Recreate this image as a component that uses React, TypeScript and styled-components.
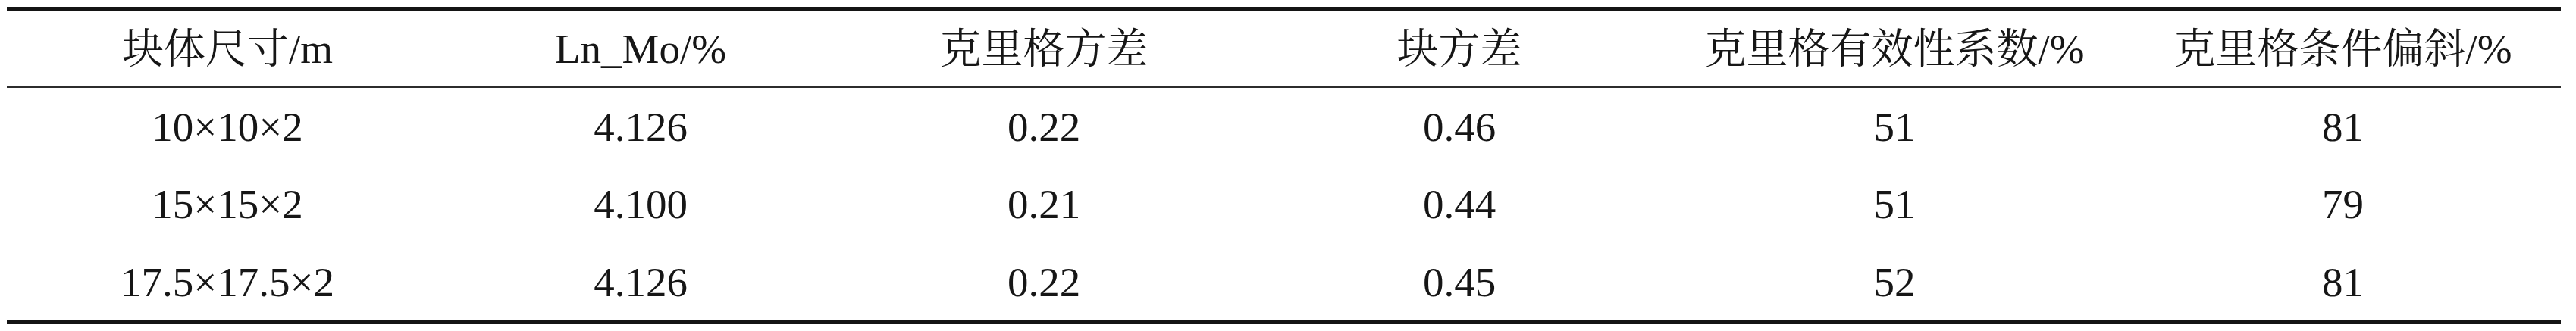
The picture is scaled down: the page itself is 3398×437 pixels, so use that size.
import * as React from 'react';
import styled, {createGlobalStyle} from 'styled-components';

const GlobalStyle = createGlobalStyle`
  html, body {
    margin: 0;
    padding: 0;
    background: #ffffff;
  }
`;

const Page = styled.div`
  padding: 9px 20px 0 9px;
  font-family: "Liberation Serif", "Noto Serif CJK SC", "Noto Sans CJK SC", serif;
  font-size: 55px;
  color: #161616;
`;

const Table = styled.div`
  display: grid;
  grid-template-columns: 582px 508px 556px 540px 608px 575px;
  width: 3369px;
  border-top: 5px solid #141414;
  border-bottom: 5px solid #141414;
`;

const Cell = styled.div<{ $head?: boolean }>`
  height: ${p => (p.$head ? '99px' : '102.33px')};
  line-height: ${p => (p.$head ? '101px' : '104px')};
  text-align: center;
  white-space: nowrap;
  border-bottom: ${p => (p.$head ? '3px solid #2c2c2c' : 'none')};
`;

const headers = [
  '块体尺寸/m',
  'Ln_Mo/%',
  '克里格方差',
  '块方差',
  '克里格有效性系数/%',
  '克里格条件偏斜/%',
];

const rows = [
  ['10×10×2', '4.126', '0.22', '0.46', '51', '81'],
  ['15×15×2', '4.100', '0.21', '0.44', '51', '79'],
  ['17.5×17.5×2', '4.126', '0.22', '0.45', '52', '81'],
];

export default function App() {
  return (
    <>
      <GlobalStyle/>
      <Page>
        <Table>
          {headers.map(h => (
            <Cell key={h} $head>{h}</Cell>
          ))}
          {rows.map((r, i) =>
            r.map((v, j) => <Cell key={`${i}-${j}`}>{v}</Cell>),
          )}
        </Table>
      </Page>
    </>
  );
}
